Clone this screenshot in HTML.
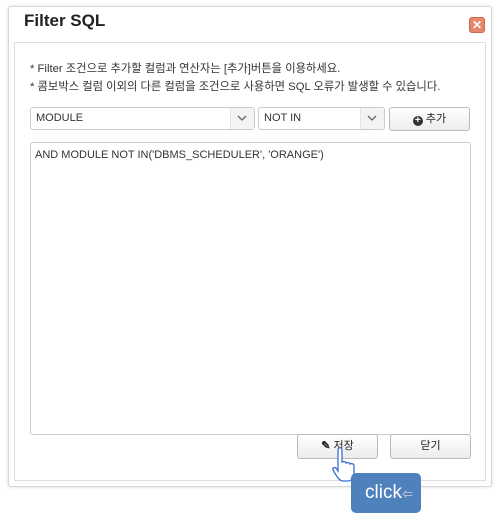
<!DOCTYPE html>
<html><head><meta charset="utf-8"><style>
body{margin:0;width:503px;height:524px;background:#fff;position:relative;overflow:hidden;font-family:"Liberation Sans","Noto Sans CJK KR",sans-serif;}
.a{position:absolute;box-sizing:border-box}
.dlg{left:8px;top:6px;width:484px;height:481px;border:1px solid #d8d8d8;border-radius:3px;box-shadow:0 0 3px rgba(0,0,0,.15);background:#fff}
.title{left:24px;top:11px;font-size:17px;font-weight:bold;color:#222}
.close{left:469px;top:17px;width:16px;height:16px;background:#e8866a;border-radius:3px;border:1px solid #c9694d;color:#fff;font-size:12px;line-height:14px;text-align:center;font-weight:bold}
.panel{left:14px;top:42px;width:472px;height:439px;border:1px solid #ddd;background:#fff}
.txt{left:30px;font-size:11.3px;color:#333}
.sel{top:107px;height:23px;border:1px solid #ccc;border-radius:3px;font-size:11px;color:#333;line-height:21px;padding-left:5px;background:#fff}
.arr{position:absolute;right:0;top:0;width:23px;height:21px;background:#f3f3f3;border-left:1px solid #e5e5e5}
.btn{border:1px solid #bbb;border-radius:3px;background:linear-gradient(#fff,#ececec);font-size:11px;text-align:center;color:#222}
</style></head><body>
<div class="a dlg"></div>
<div class="a title">Filter SQL</div>
<div class="a close">✕</div>
<div class="a panel"></div>
<div class="a txt" style="top:60px">* Filter 조건으로 추가할 컬럼과 연산자는 [추가]버튼을 이용하세요.</div>
<div class="a txt" style="top:78px">* 콤보박스 컬럼 이외의 다른 컬럼을 조건으로 사용하면 SQL 오류가 발생할 수 있습니다.</div>
<div class="a sel" style="left:30px;width:225px">MODULE<div class="arr"><svg width="23" height="21"><path d="M7 8l4 4 4-4" stroke="#666" fill="none" stroke-width="1.3"/></svg></div></div>
<div class="a sel" style="left:258px;width:127px">NOT IN<div class="arr"><svg width="23" height="21"><path d="M7 8l4 4 4-4" stroke="#666" fill="none" stroke-width="1.3"/></svg></div></div>
<div class="a btn" style="left:389px;top:107px;width:81px;height:24px;line-height:22px"><span style="display:inline-block;width:10px;height:10px;border-radius:50%;background:#333;color:#fff;font-size:10px;line-height:10px;vertical-align:-1px;font-weight:bold">+</span> 추가</div>
<div class="a" style="left:30px;top:142px;width:441px;height:293px;border:1px solid #ccc;border-radius:3px;font-size:11px;color:#333;padding:6px 4px">AND MODULE NOT IN('DBMS_SCHEDULER', 'ORANGE')</div>
<div class="a btn" style="left:297px;top:434px;width:81px;height:25px;line-height:23px"><b>✎</b> 저장</div>
<div class="a btn" style="left:390px;top:434px;width:81px;height:25px;line-height:23px">닫기</div>
<svg class="a" style="left:330px;top:446px" width="30" height="40"><path d="M8 4c0-3 4-3 4 0v12c2-1 4 0 4 1 2-1 4 0 4 1 2-1 4 0 4 2v8c0 4-3 7-6 7h-5c-3 0-5-3-7-6l-3-5c-1-2 1-3 3-2l2 3z" fill="#fff" stroke="#3a6fd0" stroke-width="1.3"/></svg>
<div class="a" style="left:351px;top:473px;width:70px;height:40px;background:#4f81bd;border-radius:5px;color:#fff;font-size:19px;line-height:40px;padding-left:14px">click<span style="font-size:11px;color:#ccd">⇐</span></div>
</body></html>
